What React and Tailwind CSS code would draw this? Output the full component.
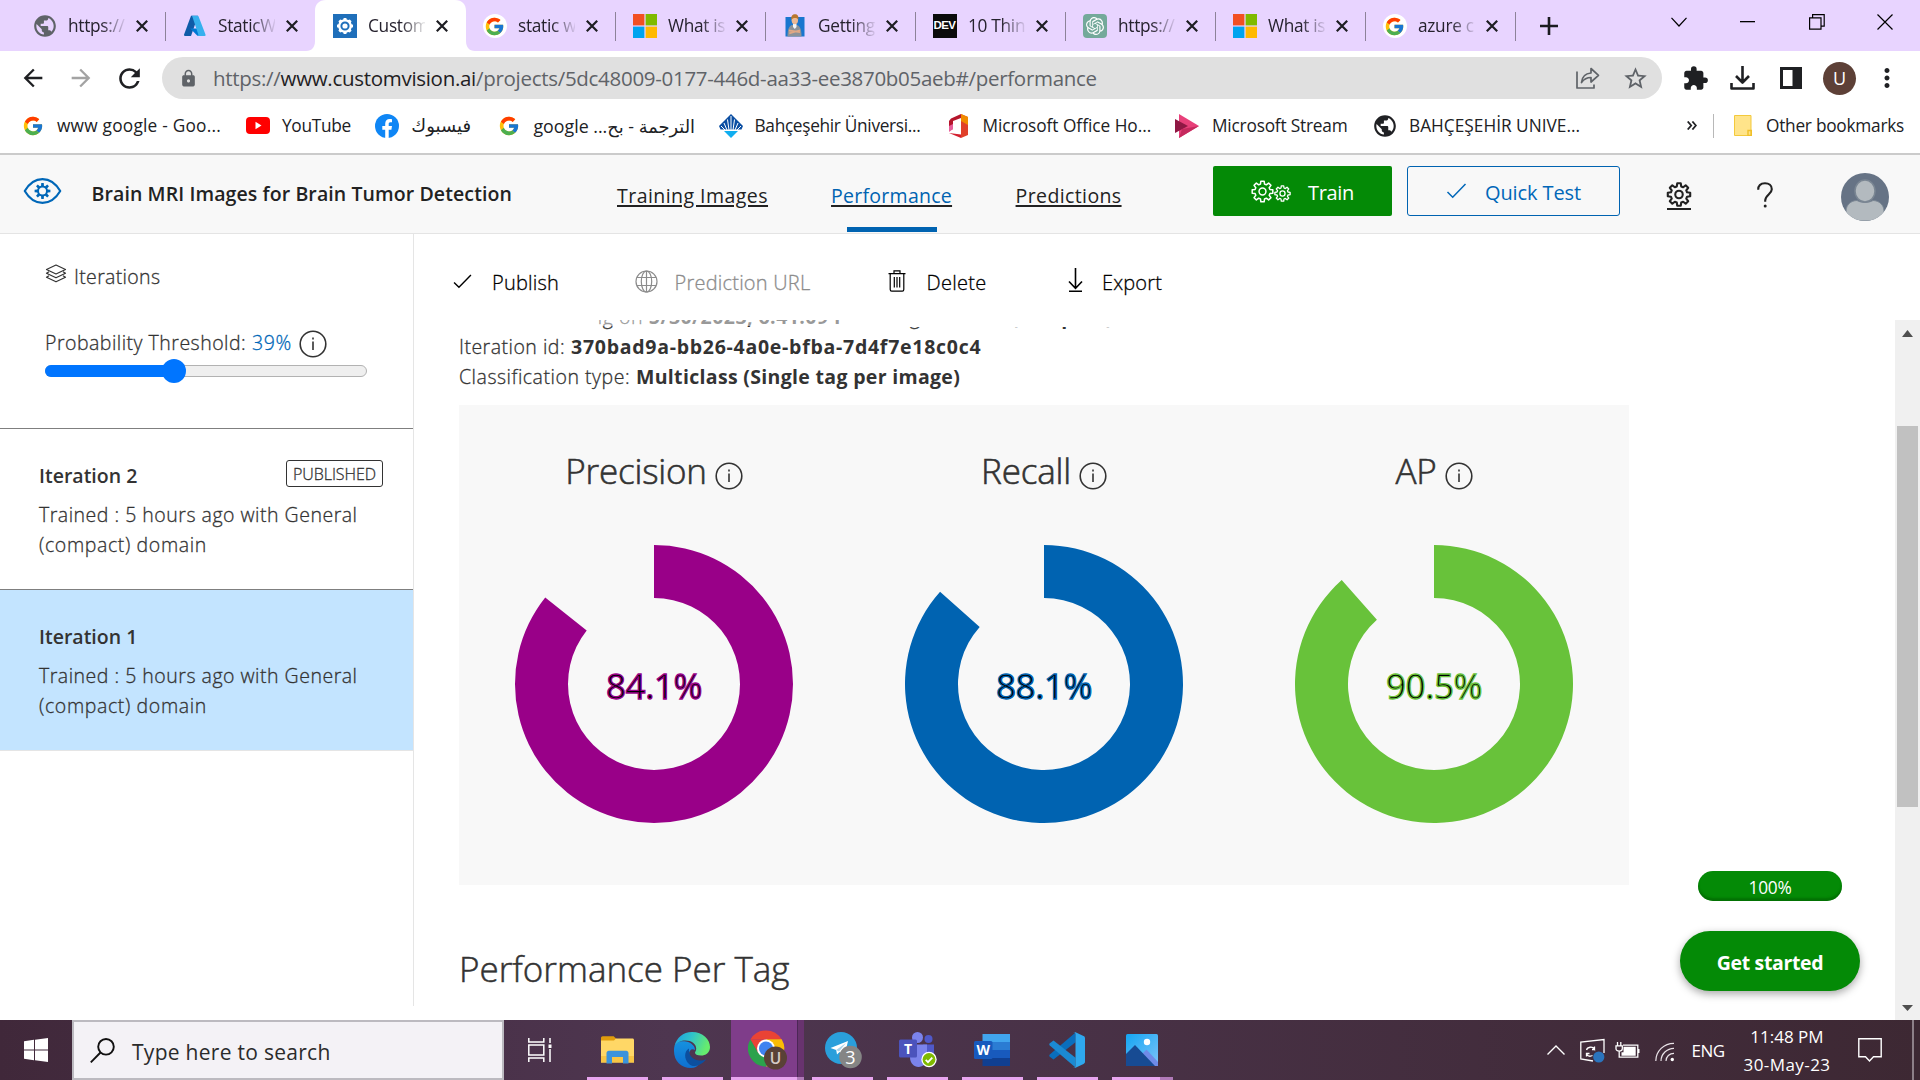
import React from "react";
import { FcGoogle } from "react-icons/fc";
import { SiOpenai } from "react-icons/si";
import { MdPublic, MdExtension, MdStarBorder, MdLock, MdArrowBack, MdArrowForward, MdRefresh, MdMoreVert } from "react-icons/md";

/* ---------- shared drawings ---------- */

function gearPath(cx, cy, outer, inner, teeth) {
  const pts = [];
  const step = (Math.PI * 2) / teeth;
  for (let i = 0; i < teeth; i++) {
    const a = i * step - Math.PI / 2;
    [[-0.34, inner], [-0.2, outer], [0.2, outer], [0.34, inner]].forEach(([o, r]) => {
      pts.push(`${(cx + Math.cos(a + o * step) * r).toFixed(2)} ${(cy + Math.sin(a + o * step) * r).toFixed(2)}`);
    });
  }
  return `M${pts.join("L")}Z`;
}

const Gear = ({ size, stroke = 1.6, className }) => (
  <svg width={size} height={size} viewBox="0 0 26 26" fill="none" stroke="currentColor" strokeWidth={stroke} strokeLinejoin="round" className={className}>
    <path d={gearPath(13, 13, 11.8, 8.7, 8)} />
    <circle cx="13" cy="13" r="3.9" />
  </svg>
);

const Info = ({ size, className }) => (
  <svg width={size} height={size} viewBox="0 0 28 28" fill="none" stroke="currentColor" strokeWidth="1.6" className={className}>
    <circle cx="14" cy="14" r="12.8" />
    <path d="M14 11.5v8.5M14 7.6v2" />
  </svg>
);

const Check = ({ w, h, className }) => (
  <svg width={w} height={h} viewBox="0 0 20 16" fill="none" stroke="currentColor" strokeWidth="1.5" className={className}>
    <path d="M1 9l5.2 5.2L19 1" />
  </svg>
);

const Microsoft = () => (
  <svg width="24" height="24" viewBox="0 0 24 24">
    <path fill="#f25022" d="M0 0h11.4v11.4H0z" />
    <path fill="#7fba00" d="M12.6 0H24v11.4H12.6z" />
    <path fill="#00a4ef" d="M0 12.6h11.4V24H0z" />
    <path fill="#ffb900" d="M12.6 12.6H24V24H12.6z" />
  </svg>
);

const GoogleBadge = () => (
  <span className="flex size-6 items-center justify-center rounded-full bg-white">
    <FcGoogle size={21} />
  </span>
);

const Azure = () => (
  <svg width="24" height="24" viewBox="0 0 24 24">
    <path fill="#0f5ba8" d="M8 1.8h7L8 22H2.2a1.2 1.2 0 0 1-1.1-1.6z" />
    <path fill="#0078d4" d="M17.8 14.6H7.2l7.2 7.2 5.5.2z" />
    <path fill="#37b0ee" d="M15.6 2.6a1.2 1.2 0 0 0-1.1-.8H8.2c.5 0 1 .3 1.1.8l6 17.8A1.2 1.2 0 0 1 14.2 22h7.2a1.2 1.2 0 0 0 1.1-1.600z" />
  </svg>
);

const CustomVisionTab = () => (
  <span className="flex size-6 items-center justify-center bg-[#1f6fba] text-white">
    <svg width="18" height="18" viewBox="0 0 20 20" fill="none" stroke="currentColor">
      <path d={gearPath(10, 10, 9, 7.6, 8)} fill="currentColor" stroke="none" />
      <circle cx="10" cy="10" r="4" stroke="#1f6fba" strokeWidth="2.2" />
    </svg>
  </span>
);

const Person = () => (
  <svg width="24" height="24" viewBox="0 0 24 24">
    <rect x="2.5" y="3" width="19" height="19.5" fill="#1976cf" />
    <path d="M4.5 22.5c0-7 1.500-10.500 4.500-11.500h5c3 1 4.500 4.500 4.500 11.500z" fill="#8b9299" />
    <path d="M10 10h3.500v3L11.800 15 10 13z" fill="#f4f6f8" />
    <path d="M6 15.500l11 1.800v1.800L6 17.500zM6 18.500l11-3v1.600l-10.500 3.200z" fill="#e0a885" />
    <ellipse cx="11.8" cy="6.2" rx="3.2" ry="4" fill="#ecb995" />
    <path d="M8.300 5.600C8 1.800 9.500.3 12 .3s3.800 1.600 3.400 5.300c-.8-2-5.500-2.200-7.100 0z" fill="#b9772f" />
  </svg>
);

const Dev = () => (
  <span className="flex size-6 items-center justify-center bg-[#0b0b0b] text-[11.5px] font-bold tracking-[-0.6px] text-white font-['Liberation_Sans',sans-serif]">DEV</span>
);

const OpenAI = () => (
  <span className="flex size-6 items-center justify-center rounded-[4px] bg-[#74a99a] text-white">
    <SiOpenai size={18} />
  </span>
);

const CloseX = ({ className }) => (
  <svg width="12" height="12" viewBox="0 0 12 12" stroke="#1d1d22" strokeWidth="2.2" className={className}>
    <path d="M.8.8l10.400 10.400M11.200.8L.8 11.200" />
  </svg>
);

/* ---------- browser tabs ---------- */

const TABS = [
  { t: "https://", icon: <MdPublic size={26} className="-m-px text-[#5f6368]" /> },
  { t: "StaticW", icon: <Azure /> },
  { t: "Custom", icon: <CustomVisionTab />, active: true },
  { t: "static w", icon: <GoogleBadge /> },
  { t: "What is", icon: <Microsoft /> },
  { t: "Getting", icon: <Person /> },
  { t: "10 Thin", icon: <Dev /> },
  { t: "https://", icon: <OpenAI /> },
  { t: "What is", icon: <Microsoft /> },
  { t: "azure c", icon: <GoogleBadge /> },
];

function Tab({ t, icon, active, line }) {
  return (
    <div className="relative flex h-[51px] w-[150px] shrink-0">
      {active && (
        <svg className="absolute bottom-0 -left-[9.5px]" width="169" height="51" viewBox="0 0 169 51">
          <path fill="#fff" d="M0 51c6 0 9-4 9-10V11C9 4 13 0 20 0h129c7 0 11 4 11 11v30c0 6 3 10 9 10z" />
        </svg>
      )}
      <div className="relative flex h-[52px] w-full items-center pl-[17px]">
        <span className="flex size-6 shrink-0 items-center justify-center">{icon}</span>
        <span className="ml-[11.5px] w-[57px] overflow-hidden text-[17.3px] leading-7 tracking-[-0.3px] whitespace-nowrap text-[#26222e] [mask-image:linear-gradient(to_right,black_58%,transparent_104%)]">{t}</span>
        <CloseX className="ml-[11px]" />
        {line && <span className="absolute top-3 right-0 h-[29px] w-px bg-[#8d8299]" />}
      </div>
    </div>
  );
}

function TabStrip() {
  return (
    <div className="flex h-[51px] bg-[#e8d4ff] pl-[15.5px]">
      {TABS.map((tab, i) => (
        <Tab key={i} {...tab} line={i !== 1 && i !== 2} />
      ))}
      <div className="flex w-[67px] items-center justify-center">
        <svg width="18" height="18" viewBox="0 0 18 18" stroke="#1b1b20" strokeWidth="2.6"><path d="M9 0v18M0 9h18" /></svg>
      </div>
      <div className="ml-auto flex h-[43px] items-center text-black">
        <div className="flex w-[68px] justify-center"><svg width="16" height="10" viewBox="0 0 16 10" fill="none" stroke="currentColor" strokeWidth="1.2"><path d="M.5.8L8 9 15.5.8" /></svg></div>
        <div className="flex w-[69px] justify-center"><svg width="15" height="2" viewBox="0 0 15 2"><path fill="currentColor" d="M0 0h15v1.300H0z" /></svg></div>
        <div className="flex w-[69px] justify-center"><svg width="16" height="16" viewBox="0 0 16 16" fill="none" stroke="currentColor" strokeWidth="1.2"><path d="M.6 3.800h11.400v11.400H.6zM3.600 3.800V.7h11.600v11.500H12" /></svg></div>
        <div className="flex w-[69px] justify-center pr-px"><svg width="16" height="16" viewBox="0 0 16 16" stroke="currentColor" strokeWidth="1.2"><path d="M.5.5l15 15M15.5.5l-15 15" /></svg></div>
      </div>
    </div>
  );
}

/* ---------- toolbar ---------- */

function Toolbar() {
  return (
    <div className="flex h-[54px] items-center bg-white text-[#1f2023]">
      <div className="flex w-[57px] justify-center pl-[9px]"><MdArrowBack size={28} /></div>
      <div className="flex w-12 justify-center text-[#a3a3a3]"><MdArrowForward size={28} /></div>
      <div className="flex w-[48px] justify-center"><MdRefresh size={31} /></div>
      <div className="ml-[9px] flex h-[42px] w-[1500px] items-center rounded-full bg-[#e0e0e0] text-[#5f6368]">
        <MdLock size={19} className="ml-[17px]" />
        <span className="ml-[15px] text-[20.5px] leading-[30px] tracking-[-0.295px] whitespace-nowrap">
          https://<span className="text-[#1f2023]">www.customvision.ai</span>/projects/5dc48009-0177-446d-aa33-ee3870b05aeb#/performance
        </span>
        <svg className="ml-auto" width="24" height="22" viewBox="0 0 24 22" fill="none" stroke="currentColor" strokeWidth="1.7" strokeLinejoin="round">
          <path d="M1 4.500V21h17v-3.500" /><path d="M5.500 15.500C6 10 9.500 6.500 15 6V1.500l7.500 6.800L15 15v-4.500c-4 0-7 1.500-9.500 5z" />
        </svg>
        <MdStarBorder size={27} className="mr-[13px] ml-[22px]" />
      </div>
      <MdExtension size={27} className="ml-[19.5px]" />
      <svg className="ml-[21.5px]" width="25" height="25" viewBox="0 0 25 25" fill="none" stroke="currentColor" strokeWidth="2.6"><path d="M12.500 0v16M6 10l6.500 6.500L19 10M1.500 17v5.500h22V17" strokeLinejoin="round" /></svg>
      <svg className="ml-[25px]" width="22" height="22" viewBox="0 0 22 22"><path fill="currentColor" fillRule="evenodd" d="M0 0h22v22H0zM3 3v16h9.500V3z" /></svg>
      <span className="ml-[21px] flex size-[33px] items-center justify-center rounded-full bg-[#5d4037] text-[18px] leading-none text-white">U</span>
      <MdMoreVert size={30} className="ml-4" />
    </div>
  );
}

/* ---------- bookmarks ---------- */

function Bookmarks() {
  return (
    <div className="flex h-[48px] items-center bg-white pb-[7px] text-[17.3px] leading-7 whitespace-nowrap text-[#202124]">
      <FcGoogle size={22} className="ml-[22px]" />
      <span className="ml-[13px] w-[166px] tracking-[0.22px]">www google - Goo...</span>
      <svg className="ml-[23px]" width="24" height="17" viewBox="0 0 24 17"><rect width="24" height="17" rx="4" fill="#f00" /><path fill="#fff" d="M9.500 4.800v7.400l6-3.700z" /></svg>
      <span className="ml-3 w-[70px] tracking-[-0.3px]">YouTube</span>
      <svg className="ml-[23px]" width="24" height="24" viewBox="0 0 24 24"><circle cx="12" cy="12" r="12" fill="#0f86f5" /><path fill="#fff" d="M10.200 24v-8.300H7.300v-3.600h2.900V9.800c0-3.300 1.700-4.900 4.500-4.900.8 0 1.700.1 2.300.3v3.100h-1.600c-1.400 0-1.700.7-1.700 1.700v2.100H17l-.6 3.600h-2.700V24z" /></svg>
      <span className="ml-[12px] w-[60px] text-[18px] font-['DejaVu_Sans',sans-serif]" dir="rtl">فيسبوك</span>
      <FcGoogle size={22} className="ml-[27px]" />
      <span className="ml-[12px] w-[163px] text-right text-[17.8px] font-['Open_Sans','DejaVu_Sans',sans-serif]" dir="rtl">الترجمة - بح... google</span>
      <svg className="ml-[24px]" width="24" height="24" viewBox="0 0 24 24">
        <path fill="#0b4ea2" d="M12 0l6 6 6 6-1.500 3.500h-21L0 12l6-6z" />
        <path stroke="#fff" strokeWidth="1" fill="none" d="M12 16V2M10 16L8.500 5.500M14 16l1.500-10.500M8 16L5 9M16 16l3-7M6 16l-4-4M18 16l4-4" />
        <path fill="#10aef0" d="M5 17h14l-7 7z" />
      </svg>
      <span className="ml-[11.5px] w-[170.5px] tracking-[-0.32px]">Bahçeşehir Üniversi...</span>
      <svg className="ml-[24px]" width="19" height="24" viewBox="0 0 19 24">
        <path fill="#b5152b" d="M12 0L2 4.500 0 7v10l4-2V7l8-3z" /><path fill="#e0402a" d="M12 0l7 3v18l-7 3z" /><path fill="#f08a00" d="M12 0l7 3v8l-7-4z" /><path fill="#d3202f" d="M0 19l12 1.500V24z" /><path fill="#e85f9c" d="M0 12l4-2v5l-4 3z" />
      </svg>
      <span className="ml-[14.5px] w-[168.5px] tracking-[-0.03px]">Microsoft Office Ho...</span>
      <svg className="ml-6" width="24" height="24" viewBox="0 0 24 24"><path fill="#e8407a" d="M4 0l20 12L4 24z" /><path fill="#8f1844" d="M0 5l13 7-13 7z" /><path fill="#c52a5e" d="M4 24l3-9 17-3z" /></svg>
      <span className="ml-[13px] w-[137px] tracking-[-0.2px]">Microsoft Stream</span>
      <MdPublic size={26} className="ml-[23px]" />
      <span className="ml-[11px]">BAHÇEŞEHİR UNIVE...</span>
      <svg className="ml-auto" width="10" height="9" viewBox="0 0 10 9" fill="none" stroke="currentColor" strokeWidth="1.8"><path d="M.7.5l3.500 4-3.500 4M5.400.5l3.500 4-3.500 4" /></svg>
      <span className="ml-4 h-6 w-px bg-[#b8b8b8]" />
      <svg className="ml-5" width="18" height="21" viewBox="0 0 18 21"><path fill="#ffe48a" stroke="#f3c93c" d="M.5.5h16.500v20H.5z" /><path fill="none" stroke="#f0c02a" strokeWidth="1.4" d="M14 20.500v-5h3.300v5z" /></svg>
      <span className="mr-[15px] ml-[14px] w-[139px] tracking-[-0.26px]">Other bookmarks</span>
    </div>
  );
}

/* ---------- app header ---------- */

function Header() {
  return (
    <div className="flex h-[81px] border-t-2 border-b border-t-[#cbcbcb] border-b-[#e4e4e4] bg-[#f8f8f8] text-[19.5px] whitespace-nowrap text-[#222]">
      <svg className="mt-[22px] ml-[23px] shrink-0 text-[#0067b8]" width="39" height="28" viewBox="0 0 40 28" fill="none" stroke="currentColor" strokeWidth="2.2" strokeLinejoin="round">
        <path d="M1.800 14C6.500 6 12.500 1.800 20 1.800S33.500 6 38.200 14C33.500 22 27.500 26.200 20 26.200S6.500 22 1.800 14z" />
        <path fill="currentColor" stroke="none" d={gearPath(20, 14, 8.2, 5.6, 8)} />
        <circle cx="20" cy="14" r="3.600" fill="#f8f8f8" stroke="none" />
      </svg>
      <span className="mt-[23.5px] ml-[29.500px] w-[526.5px] leading-[30px] font-semibold tracking-[0.1px]">Brain MRI Images for Brain Tumor Detection</span>
      <div className="flex w-[595px] pt-[25.5px] leading-[30px] font-medium underline decoration-2 underline-offset-[2px]">
        <span className="-ml-px tracking-[0.46px]">Training Images</span>
        <span className="relative ml-[63px] tracking-[0.27px] text-[#0063b1]">
          Performance
          <span className="absolute top-[46.5px] left-[15.500px] h-[5px] w-[90px] bg-[#0063b1]" />
        </span>
        <span className="ml-[63.5px] tracking-[0.39px]">Predictions</span>
      </div>
      <button className="mt-[11px] flex h-[50px] w-[179px] items-center rounded-[2px] bg-[#048a06] pl-[38px] text-[20px] text-white">
        <Gear size={23} stroke={1.7} /><Gear size={17} stroke={2} className="mt-1" />
        <span className="mt-[3px] ml-[17px] leading-[30px] tracking-[-0.33px]">Train</span>
      </button>
      <button className="mt-[11px] ml-[15px] flex h-[50px] w-[213px] items-center rounded-[3px] border border-[#0063b1] pl-[38px] text-[20px] text-[#0067b8]">
        <Check w={21} h={16} />
        <span className="mt-[3px] ml-[18px] leading-[30px] tracking-[-0.1px]">Quick Test</span>
      </button>
      <span className="mt-[27px] ml-[45.5px] flex h-[28px] flex-col items-center">
        <Gear size={26} stroke={2.2} />
        <span className="mt-px h-[2px] w-[24px] shrink-0 bg-[#222]" />
      </span>
      <svg className="mt-[27px] ml-[65.5px]" width="16" height="26" viewBox="0 0 16 26" fill="none" stroke="currentColor" strokeWidth="2.1"><path d="M1.200 7.800C1.200 3.500 4 1.200 8 1.200s6.800 2.400 6.800 6c0 5-6.600 5.600-6.600 11.300v1.200" /><circle cx="8.2" cy="24" r="1.5" fill="currentColor" stroke="none" /></svg>
      <svg className="mt-[18px] ml-[67.5px]" width="48" height="48" viewBox="0 0 48 48">
        <clipPath id="avatar"><circle cx="24" cy="24" r="24" /></clipPath>
        <g clipPath="url(#avatar)"><path fill="#667385" d="M0 0h48v48H0z" /><path fill="#b3babf" stroke="#7a8693" strokeWidth="1" d="M5 48V38c0-6 5-10.500 11-10.500 4 2.500 12 2.500 16 0 6 0 11 4.500 11 10.500v10z" /><ellipse cx="24" cy="18" rx="10" ry="11" fill="#b3babf" stroke="#7a8693" strokeWidth="1.5" /></g>
      </svg>
    </div>
  );
}

/* ---------- sidebar ---------- */

function IterationCard({ name, published, selected }) {
  return (
    <div className={`h-[161px] border-t border-[#7f7f7f] pl-[39px] text-[#333] ${selected ? "bg-[#c3e4ff]" : ""}`}>
      <div className="flex items-start justify-between pt-8 pr-[30px]">
        <span className="text-[19.5px] leading-[30px] font-semibold [-webkit-text-stroke-width:0px]">{name}</span>
        {published && <span className="-mt-px flex h-[27px] w-[97px] items-center justify-center rounded-[3px] border border-[#333] text-[16px] leading-none tracking-[-0.06px]">PUBLISHED</span>}
      </div>
      <div className="mt-[8.5px] text-[19.5px] leading-[30px] tracking-[0.5px]">
        Trained : 5 hours ago with General
        <br />
        <span className="tracking-[0.63px]">(compact) domain</span>
      </div>
    </div>
  );
}

function Sidebar() {
  const threshold = 39;
  return (
    <div className="h-[772px] w-[414px] shrink-0 border-r border-[#e5e5e5] text-[19.5px] font-light text-[#333] [-webkit-text-stroke-width:0.3px]">
      <div className="h-[194px] pt-[27px] pl-[45px]">
        <div className="flex h-[30px]">
          <svg className="mt-[3px]" width="22" height="19" viewBox="0 0 22 19" fill="none" stroke="#333" strokeWidth="1.2" strokeLinejoin="round"><path d="M11 1l9.500 4.500L11 10 1.500 5.500zM4 7.700L1.500 9.300 11 13.800l9.500-4.500L18 7.700M4 11.700l-2.500 1.600L11 17.800l9.500-4.500-2.500-1.600" /></svg>
          <span className="ml-[7px] leading-[31px] tracking-[0.33px]">Iterations</span>
        </div>
        <div className="mt-[37px] flex items-center leading-[30px]">
          <span className="w-[207px] tracking-[0.49px]">Probability Threshold:</span>
          <span className="w-[47px] tracking-[0.66px] text-[#0067b8]">{threshold}%</span>
          <Info size={28} className="mt-px" />
        </div>
        <div className="relative mt-[7px] h-[12px] w-[322px] rounded-full border border-[#b2b2b2] bg-[#efefef]">
          <div className="absolute -top-px -left-px h-[12px] rounded-full bg-[#0075ff]" style={{ width: `${threshold + 1}%` }} />
          <div className="absolute -top-[7px] size-[24px] -translate-x-1/2 rounded-full bg-[#0075ff]" style={{ left: `${threshold + 1}%` }} />
        </div>
      </div>
      <IterationCard name="Iteration 2" published />
      <IterationCard name="Iteration 1" selected />
      <div className="h-px bg-[#e5e5e5]" />
    </div>
  );
}

/* ---------- performance content ---------- */

function Donut({ sweep, color, value }) {
  const rad = (sweep * Math.PI) / 180;
  const R = 139, r = 86, c = 139;
  const p = (k) => `${c + k * Math.sin(rad)} ${c - k * Math.cos(rad)}`;
  return (
    <div className="relative mx-auto mt-[59.5px] size-[278px]">
      <svg width="278" height="278" viewBox="0 0 278 278">
        <path fill={color} d={`M${c} ${c - R}A${R} ${R} 0 1 1 ${p(R)}L${p(r)}A${r} ${r} 0 1 0 ${c} ${c - r}Z`} />
      </svg>
      <span className="absolute inset-0 pt-[2px] text-center text-[35px] leading-[278px] font-normal tracking-[-0.43px] text-black" style={{ WebkitTextStroke: `1.3px ${color}` }}>{value}</span>
    </div>
  );
}

const METRICS = [
  { name: "Precision", value: "84.1%", sweep: 308.5, color: "#990088" },
  { name: "Recall", value: "88.1%", sweep: 311.6, color: "#0063b1" },
  { name: "AP", value: "90.5%", sweep: 318.4, color: "#68c23a" },
];

function CommandBar() {
  return (
    <div className="flex h-[86px] items-start pt-[34px] pl-[38px] text-[20px] leading-[30px] font-light text-black [-webkit-text-stroke-width:0.3px]">
      <Check w={21} h={15} className="mt-[6px]" />
      <span className="ml-[19px] w-[67px] tracking-[0.2px]">Publish</span>
      <svg className="mt-[1.5px] ml-[76px] text-[#8c8c8c]" width="23" height="23" viewBox="0 0 23 23" fill="none" stroke="currentColor" strokeWidth="1.2"><circle cx="11.5" cy="11.5" r="10.5" /><ellipse cx="11.5" cy="11.5" rx="5.2" ry="10.5" /><path d="M11.500 1v21M2 7.500h19M2 15.500h19" /></svg>
      <span className="ml-[16.5px] w-[136px] tracking-[0.22px] text-[#8c8c8c]">Prediction URL</span>
      <svg className="mt-[2px] ml-[77px]" width="18" height="22" viewBox="0 0 18 22" fill="none" stroke="currentColor" strokeWidth="1.2"><path d="M.5 3.700h17M2.200 3.700v15.800c0 1 .6 1.700 1.500 1.700h10.600c.9 0 1.500-.7 1.500-1.700V3.700M6 3.500V.8h6v2.700M6.300 7v10.500M9 7v10.500M11.700 7v10.500" /></svg>
      <span className="ml-[21px] w-[59px] tracking-[0.28px]">Delete</span>
      <svg className="ml-[82px]" width="15" height="24" viewBox="0 0 15 24" fill="none" stroke="currentColor" strokeWidth="1.6"><path d="M7.500 0v20M1 13.500l6.500 6.800 6.500-6.800M1 23.200h13" /></svg>
      <span className="ml-[19.5px] tracking-[0.15px]">Export</span>
    </div>
  );
}

function Scrollbar() {
  return (
    <div className="flex h-full w-[25px] shrink-0 flex-col items-center bg-[#f0f0f0]">
      <svg className="mt-[10px] shrink-0" width="11" height="7" viewBox="0 0 11 7"><path fill="#4f4f4f" d="M5.500 0L11 7H0z" /></svg>
      <div className="mt-[89px] h-[381px] w-[21px] shrink-0 bg-[#c1c1c1]" />
      <svg className="mt-auto mb-[9px]" width="11" height="6" viewBox="0 0 11 6"><path fill="#4f4f4f" d="M5.500 6L0 0h11z" /></svg>
    </div>
  );
}

function Details() {
  return (
    <div className="relative -mt-[18.5px] h-[103.5px] text-[19.5px] leading-[30px] font-light whitespace-nowrap [-webkit-text-stroke-width:0.3px]">
      <div>
        <span className="tracking-[0.58px]">Finished training on </span>
        <b className="font-bold tracking-[0.45px] [-webkit-text-stroke-width:0px]">5/30/2023, 6:41:09 PM</b>
        <span className="tracking-[0.5px]"> using </span>
        <b className="font-bold tracking-[0.5px] [-webkit-text-stroke-width:0px]">General (compact)</b>
        <span className="tracking-[0.5px]"> domain</span>
      </div>
      <div className="absolute top-0 left-0 h-[30px] w-[137px] bg-white" />
      <div className="absolute top-0 left-[137px] h-[24px] w-[251px] bg-white/50" />
      <div className="absolute top-0 left-[388px] h-[25px] w-[400px] bg-white" />
      <div className="flex"><span className="w-[112px] tracking-[0.49px]">Iteration id:</span><b className="font-bold tracking-[0.73px] [-webkit-text-stroke-width:0px]">370bad9a-bb26-4a0e-bfba-7d4f7e18c0c4</b></div>
      <div className="flex"><span className="w-[177px] tracking-[0.52px]">Classification type:</span><b className="font-bold tracking-[0.32px] [-webkit-text-stroke-width:0px]">Multiclass (Single tag per image)</b></div>
    </div>
  );
}

function Content() {
  return (
    <div className="flex h-[786px] flex-1 flex-col text-[#333]">
      <CommandBar />
      <div className="relative flex h-[700px] overflow-hidden">
        <div className="flex-1 pl-[45px]">
          <Details />
          <div className="flex h-[480px] w-[1170px] bg-[#f8f8f8]">
            {METRICS.map((m) => (
              <div key={m.name} className="w-[390px] pt-[40.5px]">
                <div className="flex h-[40px] items-center justify-center">
                  <span className="mt-[11px] text-[35px] leading-[44px] font-light tracking-[-0.2px] [-webkit-text-stroke-width:0.6px]">{m.name}</span>
                  <Info size={28} className="mt-[21px] ml-[8px]" />
                </div>
                <Donut {...m} />
              </div>
            ))}
          </div>
          <h2 className="mt-[62px] text-[35px] leading-[44px] font-light [-webkit-text-stroke-width:0.5px]">Performance Per Tag</h2>
        </div>
        <Scrollbar />
        <div className="absolute right-[60px] bottom-[29px] flex flex-col items-center gap-[30px] text-white">
          <span className="h-[30px] w-[144px] rounded-full bg-[#048a06] pt-[2px] text-center text-[17.3px] leading-[30px] tracking-[-0.23px] shadow-[inset_0_-3px_2px_rgba(0,90,0,0.5)]">100%</span>
          <span className="h-[60px] w-[180px] rounded-full bg-[#048a06] pt-[2px] text-center text-[19.5px] leading-[60px] font-bold tracking-[-0.35px] shadow-[0_3px_8px_rgba(0,0,0,0.35)]">Get started</span>
        </div>
      </div>
    </div>
  );
}

/* ---------- taskbar ---------- */

const Folder = () => (
  <svg width="33" height="28" viewBox="0 0 33 28"><path fill="#e09c0c" d="M0 2C0 1 .7.3 1.700.3h11L15.500 3l-2 3H0z" /><path fill="#ffd766" d="M0 4.500h13l2-2h16.500c.9 0 1.500.6 1.500 1.500v22.500H0z" /><path fill="#f8c544" d="M0 20h33v6.500H0z" /><path fill="#3a93dc" d="M5.500 27.500V17c0-1.300 1-2.300 2.300-2.300h17.400c1.300 0 2.300 1 2.300 2.300v10.500H22V21H11v6.500z" /></svg>
);
const Edge = () => (
  <svg width="36" height="36" viewBox="0 0 36 36">
    <defs>
      <linearGradient id="eg1" x1="0" y1="0" x2="1" y2="0.3"><stop offset="0" stopColor="#1b9de2" /><stop offset="0.5" stopColor="#30c3c9" /><stop offset="1" stopColor="#66eb6e" /></linearGradient>
      <linearGradient id="eg2" x1="0" y1="0" x2="0" y2="1"><stop offset="0" stopColor="#1591df" /><stop offset="1" stopColor="#0f6fd0" /></linearGradient>
    </defs>
    <path fill="url(#eg2)" d="M.5 14C2 10 7 8.500 12 9.500c6 1.200 9 5 9 8.500-3-2-6 0-6 4.500 0 5.500 5 8.500 11 8.500-2 3-5 5-9 5C7 36 0 29 0 19c0-2 .1-3.500.5-5z" />
    <path fill="#0c4f9f" d="M15 16.500C10 19 10 27 14.500 31.500c3 3.300 7.500 3 10.500 1.500 3-1.400 5.500-3.500 7.500-6-5 2.500-11 2-14.500-1.500-2.600-2.700-3.500-6-3-9z" />
    <path fill="url(#eg1)" d="M.5 14C2.500 6 9 0 18 0c11 0 18 7.500 18 15 0 6-4.500 8.500-9 8.500-4 0-6-1.500-6-2.800 0-1 1.200-1.500 1.200-4.200 0-4.500-4.700-8-10.700-8C7 8.500 2.500 10.500.5 14z" />
  </svg>
);
const Chrome = () => (
  <svg className="-mt-px" width="40" height="40" viewBox="0 0 40 40">
    <path fill="#ea4335" d="M2.400 9.500A18 18 0 0 1 33.600 9.500H18z" />
    <path fill="#ea4335" d="M2.400 9.500L10.200 23 18 9.500z" />
    <path fill="#fbbc05" d="M18 9.300h15.700A18 18 0 0 1 18 36.500l7.800-13.500z" />
    <path fill="#2ba24c" d="M2.400 9.500a18 18 0 0 0 15.600 27L25.800 23H10.200z" />
    <circle cx="18" cy="18.5" r="9" fill="#fff" /><circle cx="18" cy="18.5" r="7" fill="#3f83f0" />
    <circle cx="27.5" cy="28" r="11.5" fill="#5a4136" />
    <text x="27.5" y="33.5" textAnchor="middle" fontSize="15.5" fontWeight="600" fill="#d6ccc6" fontFamily="Open Sans, sans-serif">U</text>
  </svg>
);
const Telegram = () => (
  <svg width="38" height="38" viewBox="0 0 38 38"><circle cx="17" cy="17" r="16" fill="#2a9fdb" /><path fill="#fff" d="M6.500 17L24 10l-3.500 15-5-4-2.500 2.500-.8-4.500z" /><path fill="#a9d3ea" d="M12.200 19L22 12l-7 8.500z" /><circle cx="26.5" cy="26" r="11.3" fill="#858585" /><text x="26.5" y="32.5" textAnchor="middle" fontSize="18" fill="#fff" fontFamily="Open Sans, sans-serif">3</text></svg>
);
const Teams = () => (
  <svg width="38" height="36" viewBox="0 0 38 36"><circle cx="29.5" cy="7" r="4" fill="#5059c9" /><circle cx="18.5" cy="5.5" r="5.5" fill="#7b83eb" /><path fill="#5059c9" d="M24 12.500h11v10c0 4-3 6-6 6z" /><path fill="#7b83eb" d="M11 12.500h17v13c0 6-4 9.500-8.500 9.500S11 31 11 25.500z" /><rect y="7.5" width="18" height="18" rx="1.5" fill="#4b53bc" /><text x="9" y="21.5" textAnchor="middle" fontSize="14" fontWeight="700" fill="#fff" fontFamily="Open Sans, sans-serif">T</text><circle cx="30" cy="27.5" r="7.7" fill="#fff" /><circle cx="30" cy="27.5" r="6.4" fill="#7fba00" /><path fill="none" stroke="#fff" strokeWidth="1.8" d="M26.700 27.800l2.300 2.300 4.300-4.500" /></svg>
);
const Word = () => (
  <svg width="36" height="32" viewBox="0 0 36 32"><path fill="#41a5ee" d="M8.500 0H36v8H8.500z" /><path fill="#2b7cd3" d="M8.500 8H36v8H8.500z" /><path fill="#185abd" d="M8.500 16H36v8H8.500z" /><path fill="#103f91" d="M8.500 24H36v8H8.500z" /><rect y="7" width="18.5" height="18" rx="1.5" fill="#185abd" /><text x="9.2" y="21" textAnchor="middle" fontSize="14" fontWeight="700" fill="#fff" fontFamily="Open Sans, sans-serif">W</text></svg>
);
const VSCode = () => (
  <svg width="36" height="36" viewBox="0 0 36 36"><path fill="#0a6ebd" d="M26.500.5v9.800L4.500 27.500.8 24.800c-.7-.6-.7-1.500 0-2.200z" /><path fill="#1b8ad3" d="M.8 11.200L4.500 8.500l22 17.200v9.800L.8 13.400c-.7-.7-.7-1.600 0-2.200z" /><path fill="#2fa8ee" d="M26.500.3L34.500 4c.9.4 1.500 1.200 1.500 2.200v23.600c0 1-.6 1.800-1.500 2.200l-8 3.700c-.8.3-1.800.2-2.500-.5 1 .9 2.500.2 2.500-1.200V2c0-1.300-1.500-2-2.500-1.100.7-.7 1.700-.9 2.500-.6z" /></svg>
);
const Photos = () => (
  <svg width="32" height="32" viewBox="0 0 32 32"><defs><linearGradient id="ph" x1="0" y1="0" x2="1" y2="1"><stop offset="0" stopColor="#13a6f2" /><stop offset="1" stopColor="#7ec3fa" /></linearGradient></defs><rect width="32" height="32" rx="1.5" fill="url(#ph)" /><path fill="#6f8be8" d="M14 22l6.500-6.500L32 28v4H18z" /><path fill="#174b93" d="M0 20l9-9 20 21H0z" /><circle cx="21" cy="8" r="3.2" fill="#fff" /></svg>
);

const APPS = [
  { k: "files", icon: <Folder /> }, { k: "edge", icon: <Edge /> }, { k: "chrome", icon: <Chrome />, active: true }, { k: "telegram", icon: <Telegram /> },
  { k: "teams", icon: <Teams />, wide: true }, { k: "word", icon: <Word /> }, { k: "code", icon: <VSCode /> }, { k: "photos", icon: <Photos />, multi: true },
];

function Taskbar() {
  return (
    <div className="flex h-[60px] bg-linear-to-r from-[#40283a] from-0% via-[#4e3650] via-35% to-[#3d2833] text-white">
      <div className="flex w-[72px] items-center justify-center">
        <svg width="24" height="24" viewBox="0 0 24 24" fill="#fff"><path d="M0 3.200l10-1.400v9.700H0zM11 1.700L24 0v11.500H11zM0 12.500h10v9.700L0 20.800zM11 12.500h13V24l-13-1.700z" /></svg>
      </div>
      <div className="flex w-[432px] items-center border-2 border-[#bcbac0] bg-[#f4f2f6]">
        <svg className="ml-4" width="25" height="25" viewBox="0 0 25 25" fill="none" stroke="#111" strokeWidth="1.9"><circle cx="16" cy="8.800" r="7.8" /><path d="M10.500 14.500L.8 24.300" /></svg>
        <span className="mt-[3px] ml-[17px] text-[21px] leading-[30px] tracking-[0.28px] text-[#2b2b2b]">Type here to search</span>
      </div>
      <div className="flex w-[76px] items-center justify-center pr-1">
        <svg width="24" height="24" viewBox="0 0 24 24" fill="none" stroke="#fff" strokeWidth="1.5"><path d="M.8 0v4h15V0M.8 7h15v10h-15zM.8 24v-4h15v4M22 0v5M22 11v13" /><path fill="#fff" stroke="none" d="M20.500 6.500h3v3.500h-3z" /></svg>
      </div>
      {APPS.map((a) => (
        <div key={a.k} className="relative flex w-[75px] items-center justify-center">
          {a.active && <div className="absolute inset-y-0 left-[1px] flex w-[73px] bg-[#7f3d8a]"><div className="ml-[66px] w-px bg-[#4c2756]" /><div className="flex-1 bg-[#68336f]" /></div>}
          <span className={a.active || a.wide || a.k === "telegram" ? "relative ml-px" : "relative mr-px"}>{a.icon}</span>
          {a.active ? (
            <div className="absolute bottom-0 left-[1px] h-[3px] w-[73px] bg-[#e8a5ef]"><div className="ml-[66px] h-full bg-[#b07ab8]" /></div>
          ) : (
            <div className="absolute bottom-0 left-[7px] h-[3px] w-[61px] bg-[#e8a5ef]">{a.multi && <div className="ml-[48px] h-full w-[13px] bg-[#b07ab8]" />}</div>
          )}
        </div>
      ))}
      <div className="ml-auto flex items-center">
        <svg width="18" height="10" viewBox="0 0 18 10" fill="none" stroke="#fff" strokeWidth="1.4"><path d="M.5 9.500L9 1l8.500 8.500" /></svg>
        <svg className="ml-[15px]" width="25" height="25" viewBox="0 0 25 25" fill="none" stroke="#fff" strokeWidth="1.3"><path d="M13 23L.8 21V4L24 1.500V15M6.500 12c.8-3 6-4 8-1V8.500M14.500 11.500H12M6.500 18.500V15.500h3M6.500 16c1.500 2.500 4 2.500 6 1.500" /><circle cx="18.8" cy="19" r="5.6" fill="#2b74bd" stroke="none" /></svg>
        <svg className="ml-[10.5px]" width="25" height="18" viewBox="0 0 25 18" fill="none" stroke="#fff" strokeWidth="1.3"><path d="M8 4.200h14.800v12H4.200V10M1 4.800h6.300v3c0 3-6.300 3-6.300 0zM2.500 4.800V1M5.800 4.800V1" /><path fill="#fff" stroke="none" d="M8.500 5.800h12.200v9H6.500v-3.500h2zM23 8h1.500v4H23z" /></svg>
        <svg className="mt-1 ml-[15px]" width="20" height="20" viewBox="0 0 20 20" fill="none" stroke="#e9e3e8" strokeWidth="1.2"><path d="M.8 19C.8 9 9 1.300 19 1.300M6 19C6 12 12 6.300 19 6.300M11 19c0-4.500 3.500-7.700 8-7.700" /><circle cx="17.3" cy="17.5" r="1.7" fill="#fff" stroke="none" /></svg>
        <span className="mt-px ml-[16.5px] w-[34px] text-[17px] tracking-[-0.54px]">ENG</span>
        <div className="ml-[15.5px] w-[92px] pt-px text-center text-[17px] leading-[28px]">
          <div>11:48 PM</div>
          <div className="tracking-[0.44px]">30-May-23</div>
        </div>
        <svg className="ml-[25px]" width="24" height="24" viewBox="0 0 24 24" fill="none" stroke="#fff" strokeWidth="1.4"><path d="M.8.8h22.400v18h-7.700L11.500 23l-4-4.200H.8z" /></svg>
        <div className="mr-[6px] ml-[30px] h-[60px] w-[2px] bg-[#8d7f88]" />
      </div>
    </div>
  );
}

export default function App() {
  return (
    <div className="flex h-[1080px] w-[1920px] flex-col overflow-hidden bg-white font-['Open_Sans',sans-serif]">
      <TabStrip />
      <Toolbar />
      <Bookmarks />
      <Header />
      <div className="flex h-[786px]">
        <Sidebar />
        <Content />
      </div>
      <Taskbar />
    </div>
  );
}
